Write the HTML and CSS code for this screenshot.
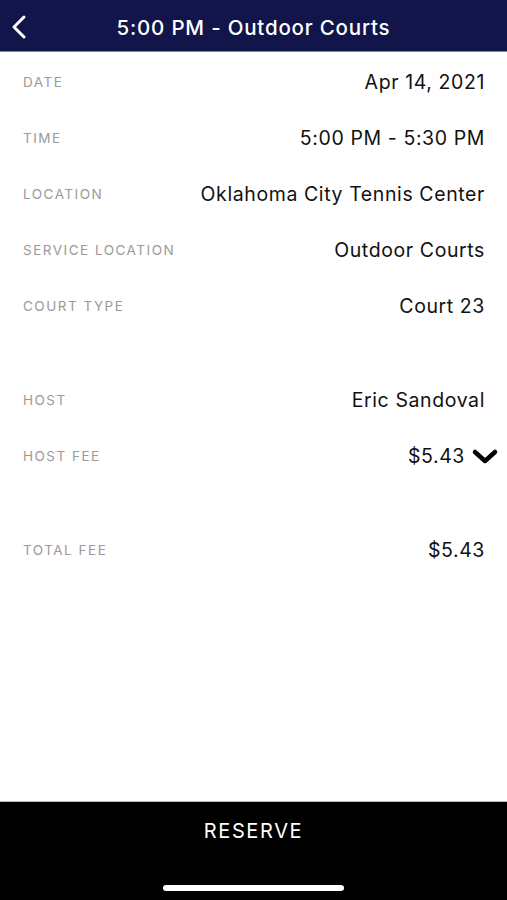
FILE: index.html
```html
<!DOCTYPE html>
<html>

<head>
    <title>Reservation</title>
    <link rel="stylesheet" href="styles.css">
</head>

<body>

    <div class="header">
        <span class="back-btn">
            <svg width="18" height="26" viewBox="0 0 18 26">
                <path d="M14 3 L4 13 L14 23" fill="none" stroke="#fff" stroke-width="3" stroke-linecap="round" stroke-linejoin="round" />
            </svg>
        </span>
        <h1>5:00 PM - Outdoor Courts</h1>
    </div>

    <div class="details">
        <div class="row">
            <span class="label">Date</span>
            <span class="value">Apr 14, 2021</span>
        </div>
        <div class="row">
            <span class="label">Time</span>
            <span class="value">5:00 PM - 5:30 PM</span>
        </div>
        <div class="row">
            <span class="label">Location</span>
            <span class="value">Oklahoma City Tennis Center</span>
        </div>
        <div class="row">
            <span class="label">Service Location</span>
            <span class="value">Outdoor Courts</span>
        </div>
        <div class="row">
            <span class="label">Court Type</span>
            <span class="value">Court 23</span>
        </div>

        <div class="spacer"></div>

        <div class="row">
            <span class="label">Host</span>
            <span class="value">Eric Sandoval</span>
        </div>
        <div class="row">
            <span class="label">Host Fee</span>
            <span class="value fee-toggle">$5.43
                <svg width="28" height="18" viewBox="0 0 28 18">
                    <path d="M4 5 L14 14 L24 5" fill="none" stroke="#000" stroke-width="4.5" stroke-linecap="round" stroke-linejoin="round" />
                </svg>
            </span>
        </div>

        <div class="spacer"></div>

        <div class="row">
            <span class="label">Total Fee</span>
            <span class="value">$5.43</span>
        </div>
    </div>

    <div class="footer">
        <button class="reserve-btn">RESERVE</button>
        <div class="home-bar"></div>
    </div>

</body>

</html>
```

FILE: styles.css
```css
body {
    margin: 0;
    font-family: Inter, "Liberation Sans", sans-serif;
    background-color: #fff;
    height: 900px;
    display: flex;
    flex-direction: column;
}

.header {
    height: 51px;
    background-color: #11154a;
    border-bottom: 1px solid #7d80a6;
    display: flex;
    align-items: center;
    justify-content: center;
    position: relative;
}

.back-btn {
    position: absolute;
    left: 10px;
    top: 14px;
}

.header h1 {
    margin: 3px 0 0;
    color: #fff;
    font-size: 20.5px;
    font-weight: 500;
    letter-spacing: 0.8px;
}

.details {
    flex: 1;
    padding: 2px 22px 0 23px;
}

.row {
    height: 56px;
    display: flex;
    align-items: center;
    justify-content: space-between;
}

.label {
    font-size: 13.5px;
    color: #9a9a9a;
    text-transform: uppercase;
    letter-spacing: 1.5px;
}

.value {
    font-size: 19.5px;
    color: #111;
    letter-spacing: 0.6px;
}

.fee-toggle {
    display: flex;
    align-items: center;
    gap: 6px;
    margin-right: -14px;
}

.spacer {
    height: 38px;
}

.footer {
    height: 98px;
    background-color: #000;
    border-top: 1px solid #bbb;
    display: flex;
    flex-direction: column;
    align-items: center;
}

.reserve-btn {
    background: none;
    border: none;
    color: #fff;
    font-family: inherit;
    font-size: 20px;
    letter-spacing: 1.6px;
    margin-top: 17px;
    padding: 0;
}

.home-bar {
    width: 181px;
    height: 6px;
    border-radius: 3px;
    background-color: #fff;
    margin-top: 42px;
}
```
